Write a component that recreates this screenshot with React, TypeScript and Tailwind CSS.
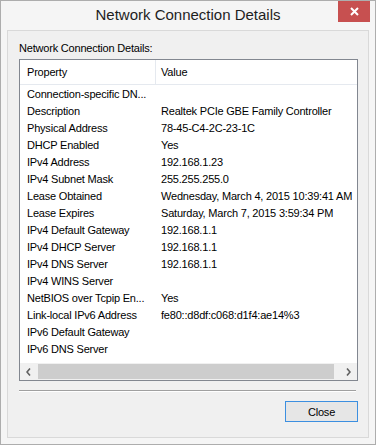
const rows: [string, string][] = [
  ['Connection-specific DN...', ''],
  ['Description', 'Realtek PCIe GBE Family Controller'],
  ['Physical Address', '78-45-C4-2C-23-1C'],
  ['DHCP Enabled', 'Yes'],
  ['IPv4 Address', '192.168.1.23'],
  ['IPv4 Subnet Mask', '255.255.255.0'],
  ['Lease Obtained', 'Wednesday, March 4, 2015 10:39:41 AM'],
  ['Lease Expires', 'Saturday, March 7, 2015 3:59:34 PM'],
  ['IPv4 Default Gateway', '192.168.1.1'],
  ['IPv4 DHCP Server', '192.168.1.1'],
  ['IPv4 DNS Server', '192.168.1.1'],
  ['IPv4 WINS Server', ''],
  ['NetBIOS over Tcpip En...', 'Yes'],
  ['Link-local IPv6 Address', 'fe80::d8df:c068:d1f4:ae14%3'],
  ['IPv6 Default Gateway', ''],
  ['IPv6 DNS Server', ''],
];

const TitleBar = () => {
  return (
    <div className="grid h-[29px] grid-cols-[1fr_auto_1fr]">
      <div />
      <p className="pt-[5px] text-[15px] leading-[18px] tracking-[0] text-[#1e1e1e]">Network Connection Details</p>
      <div className="flex justify-end pr-[5px]">
        <button className="flex h-[21px] w-[32px] items-center justify-center bg-[#c75050]">
          <svg width="9" height="9" viewBox="0 0 9 9">
            <path d="M1 1 L8 8 M8 1 L1 8" stroke="#fff" strokeWidth="2" />
          </svg>
        </button>
      </div>
    </div>
  );
};

const Chevron = ({ right }: { right?: boolean }) => {
  return (
    <div className="flex w-[17px] items-center justify-center">
      <svg width="5" height="8" viewBox="0 0 5 8">
        <path d={right ? 'M1 0.5 L4 4 L1 7.5' : 'M4 0.5 L1 4 L4 7.5'} stroke="#606060" strokeWidth="1.6" fill="none" />
      </svg>
    </div>
  );
};

const DetailsList = () => {
  return (
    <div className="mt-[3px] flex h-[322px] flex-col border border-[#828790] bg-white">
      <div className="flex h-[25px] shrink-0 items-center border-b border-[#e5e9ef]">
        <div className="flex h-full w-[136px] items-center border-r border-[#e5e9ef] pl-[7px]">Property</div>
        <div className="pl-[5px]">Value</div>
      </div>
      <div className="flex-1 overflow-hidden pt-[1px]">
        {rows.map(([name, value]) => (
          <div key={name} className="flex h-[17px] items-center whitespace-nowrap">
            <div className="w-[136px] shrink-0 overflow-hidden pl-[7px]">{name}</div>
            <div className="pl-[5px]">{value}</div>
          </div>
        ))}
      </div>
      <div className="flex h-[17px] shrink-0 bg-[#f0f0f0]">
        <Chevron />
        <div className="flex flex-1 items-center pl-[1px]">
          <div className="h-[15px] w-[296px] bg-[#cdcdcd]" />
        </div>
        <Chevron right />
      </div>
    </div>
  );
};

export default function App() {
  return (
    <div className="flex h-[445px] w-[376px] flex-col border border-[#adadad] bg-[#f5f5f5] font-['Liberation_Sans',Arial,sans-serif] text-[11px] tracking-[-0.2px] text-black">
      <TitleBar />
      <div className="mx-[6px] flex h-[408px] flex-col border border-[#d9d9d9] bg-[#f0f0f0] pl-[11px] pr-[10px] pt-[9px]">
        <p className="h-[16px] leading-[16px]">Network Connection Details:</p>
        <DetailsList />
        <div className="mr-[2px] mt-[9px] h-[2px] border-t border-[#a0a0a0] border-b border-b-white" />
        <button className="mt-[9px] h-[21px] w-[73px] self-end border border-[#3c8fe0] bg-[#e6e6e6] pt-[1px]">Close</button>
      </div>
    </div>
  );
}
